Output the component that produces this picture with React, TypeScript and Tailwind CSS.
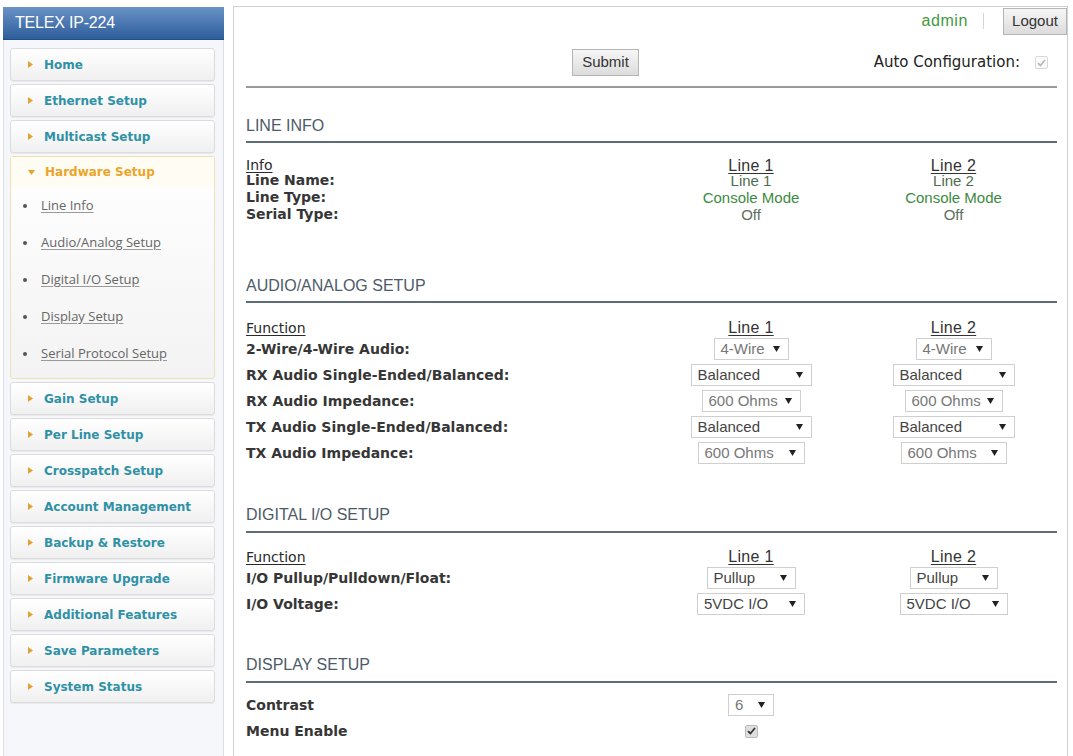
const menuTop = ["Home", "Ethernet Setup", "Multicast Setup"];
const hardwareLinks = [
  "Line Info",
  "Audio/Analog Setup",
  "Digital I/O Setup",
  "Display Setup",
  "Serial Protocol Setup",
];
const menuBottom = [
  "Gain Setup",
  "Per Line Setup",
  "Crosspatch Setup",
  "Account Management",
  "Backup & Restore",
  "Firmware Upgrade",
  "Additional Features",
  "Save Parameters",
  "System Status",
];

type SelectSpec = { value: string; w: string; muted?: boolean };

const audioRows: { label: string; l1: SelectSpec; l2: SelectSpec }[] = [
  {
    label: "2-Wire/4-Wire Audio:",
    l1: { value: "4-Wire", w: "w-[75px]", muted: true },
    l2: { value: "4-Wire", w: "w-[76px]", muted: true },
  },
  {
    label: "RX Audio Single-Ended/Balanced:",
    l1: { value: "Balanced", w: "w-[121px]" },
    l2: { value: "Balanced", w: "w-[122px]" },
  },
  {
    label: "RX Audio Impedance:",
    l1: { value: "600 Ohms", w: "w-[99px]", muted: true },
    l2: { value: "600 Ohms", w: "w-[98px]", muted: true },
  },
  {
    label: "TX Audio Single-Ended/Balanced:",
    l1: { value: "Balanced", w: "w-[121px]" },
    l2: { value: "Balanced", w: "w-[122px]" },
  },
  {
    label: "TX Audio Impedance:",
    l1: { value: "600 Ohms", w: "w-[107px]", muted: true },
    l2: { value: "600 Ohms", w: "w-[106px]", muted: true },
  },
];

const ioRows: { label: string; l1: SelectSpec; l2: SelectSpec }[] = [
  {
    label: "I/O Pullup/Pulldown/Float:",
    l1: { value: "Pullup", w: "w-[89px]" },
    l2: { value: "Pullup", w: "w-[88px]" },
  },
  {
    label: "I/O Voltage:",
    l1: { value: "5VDC I/O", w: "w-[108px]" },
    l2: { value: "5VDC I/O", w: "w-[108px]" },
  },
];

const label = "font-['DejaVu_Sans',sans-serif] text-[14px] font-bold text-[#363636]";
const arial = "font-['Liberation_Sans',Arial,sans-serif]";
const cols = "grid grid-cols-[405px_200px_205px] items-center";

const Arrow = ({ down, color }: { down?: boolean; color: string }) =>
  down ? (
    <svg width="7" height="5" viewBox="0 0 7 5" className="shrink-0">
      <path d="M0 0 L7 0 L3.5 5 Z" fill={color} />
    </svg>
  ) : (
    <svg width="5" height="7" viewBox="0 0 5 7" className="shrink-0">
      <path d="M0 0 L5 3.5 L0 7 Z" fill={color} />
    </svg>
  );

const Select = ({ value, w, muted }: SelectSpec) => (
  <div
    className={`${w} h-[22px] mx-auto flex items-center justify-between pl-[6px] pr-[8px] bg-white border border-[#cfcfcf] ${arial} text-[15px] ${
      muted ? "text-[#777]" : "text-[#444]"
    }`}
  >
    <span>{value}</span>
    <svg width="7" height="6" viewBox="0 0 7 6">
      <path d="M0 0 L7 0 L3.5 6 Z" fill="#222" />
    </svg>
  </div>
);

const Check = ({ faint }: { faint?: boolean }) => (
  <span
    className={`w-[13px] h-[13px] inline-flex items-center justify-center rounded-[2px] border ${
      faint ? "border-[#d8d8d8] bg-[#fbfbfb]" : "border-[#bbb] bg-[#dedede]"
    }`}
  >
    <svg width="9" height="8" viewBox="0 0 9 8">
      <path
        d="M1 4.2 L3.4 6.5 L8 1"
        fill="none"
        stroke={faint ? "#b8b8b8" : "#333"}
        strokeWidth="1.8"
      />
    </svg>
  </span>
);

const MenuItem = ({ text }: { text: string }) => (
  <div className="h-[33px] mb-[3px] ml-[6px] mr-[8px] flex items-center pl-[17px] rounded-[3px] border border-[#dcdcdc] bg-gradient-to-b from-white to-[#f0f0f0] shadow-[0_1px_1px_rgba(0,0,0,0.06)]">
    <Arrow color="#e3a235" />
    <span className="ml-[11px] font-['DejaVu_Sans',sans-serif] text-[12px] font-bold text-[#2f91a6]">
      {text}
    </span>
  </div>
);

const SectionTitle = ({ text, mt }: { text: string; mt: string }) => (
  <>
    <div className={`${mt} h-[20px] leading-[20px] ${arial} text-[16px] text-[#4d5b68]`}>
      {text}
    </div>
    <div className="mt-[5px] h-[2px] bg-[#5f6b76]" />
  </>
);

const ColHeads = ({ first }: { first: string }) => (
  <div className={`${cols} h-[20px]`}>
    <span className="font-['DejaVu_Sans',sans-serif] text-[14px] text-[#2a2a2a] underline underline-offset-2">
      {first}
    </span>
    <span className={`${arial} text-[16px] text-[#333] text-center underline underline-offset-2 tracking-[0.3px]`}>
      Line 1
    </span>
    <span className={`${arial} text-[16px] text-[#333] text-center underline underline-offset-2 tracking-[0.3px]`}>
      Line 2
    </span>
  </div>
);

export default function App() {
  return (
    <div className="h-[756px] overflow-hidden bg-white flex">
      {/* left navigation */}
      <aside className="w-[225px] pl-[3px] flex flex-col">
        <div className="mt-[7px] w-[221px] h-[33px] flex items-center pl-[12px] bg-gradient-to-b from-[#6a93c7] to-[#2d5d9b] border-b border-[#234c82]">
          <span className={`${arial} text-[16px] text-white tracking-[-0.2px]`}>TELEX IP-224</span>
        </div>
        <nav className="w-[221px] flex-1 pt-[8px] bg-[#f6f7fa] border-x border-[#dcdee3]">
          {menuTop.map((m) => (
            <MenuItem key={m} text={m} />
          ))}

          <div className="mb-[3px] ml-[6px] mr-[8px] rounded-[3px] border border-[#eee2b4] bg-gradient-to-b from-white to-[#f3f3f3] pb-[6px]">
            <div className="h-[30px] flex items-center pl-[17px] bg-[#fffdf3]">
              <Arrow down color="#e6a22f" />
              <span className="ml-[10px] font-['DejaVu_Sans',sans-serif] text-[12px] font-bold text-[#eba42a]">
                Hardware Setup
              </span>
            </div>
            {hardwareLinks.map((l) => (
              <div key={l} className="h-[37px] flex items-center pl-[12px]">
                <span className="w-[4px] h-[4px] rounded-full bg-[#555]" />
                <span className="ml-[14px] font-['Open_Sans',sans-serif] text-[13px] text-[#666] underline underline-offset-2 decoration-[#999]">
                  {l}
                </span>
              </div>
            ))}
          </div>

          {menuBottom.map((m) => (
            <MenuItem key={m} text={m} />
          ))}
        </nav>
      </aside>

      {/* main panel */}
      <main className="ml-[8px] mt-[6px] w-[835px] border-t border-x border-[#d0d0d0] flex flex-col">
        <div className="flex items-center justify-end h-[28px]">
          <span className={`${arial} text-[16px] text-[#3f9a3f] tracking-[0.6px]`}>admin</span>
          <span className="ml-[15px] w-px h-[16px] bg-[#d5d5d5]" />
          <button className={`ml-[19px] mt-[1px] w-[64px] h-[27px] border border-[#b5b5b5] bg-gradient-to-b from-[#f6f6f6] to-[#dcdcdc] ${arial} text-[15px] text-[#333]`}>
            Logout
          </button>
        </div>

        <div className="pl-[12px] pr-[10px]">
          <div className="mt-[14px] flex items-center">
            <div className="w-[326px]" />
            <button className={`w-[67px] h-[27px] border border-[#b5b5b5] bg-gradient-to-b from-[#f6f6f6] to-[#dcdcdc] ${arial} text-[15px] text-[#333]`}>
              Submit
            </button>
            <div className="flex-1" />
            <span className="font-['DejaVu_Sans',sans-serif] text-[15px] text-[#222]">
              Auto Configuration:
            </span>
            <span className="ml-[15px] mr-[9px] flex">
              <Check faint />
            </span>
          </div>

          <div className="mt-[10px] h-[2px] bg-[#9a9a9a]" />

          {/* line info */}
          <SectionTitle text="LINE INFO" mt="mt-[28px]" />
          <div className="mt-[12px]">
            <div className={`${cols} h-[17px]`}>
              <span className="font-['DejaVu_Sans',sans-serif] text-[14px] text-[#2a2a2a] underline underline-offset-2">
                Info
              </span>
              <span className={`${arial} text-[16px] leading-[17px] text-[#333] text-center underline underline-offset-2 tracking-[0.3px]`}>
                Line 1
              </span>
              <span className={`${arial} text-[16px] leading-[17px] text-[#333] text-center underline underline-offset-2 tracking-[0.3px]`}>
                Line 2
              </span>
            </div>
            {[
              ["Line Name:", "Line 1", "Line 2", "text-[#4f6e4f]"],
              ["Line Type:", "Console Mode", "Console Mode", "text-[#3d8a42]"],
              ["Serial Type:", "Off", "Off", "text-[#5d6e5d]"],
            ].map(([k, a, b, c]) => (
              <div key={k} className={`${cols} h-[17px] leading-[17px]`}>
                <span className={label}>{k}</span>
                <span className={`${arial} text-[15px] text-center ${c}`}>{a}</span>
                <span className={`${arial} text-[15px] text-center ${c}`}>{b}</span>
              </div>
            ))}
          </div>

          {/* audio / analog */}
          <SectionTitle text="AUDIO/ANALOG SETUP" mt="mt-[53px]" />
          <div className="mt-[13px]">
            <ColHeads first="Function" />
            {audioRows.map((r) => (
              <div key={r.label} className={`${cols} h-[26px]`}>
                <span className={label}>{r.label}</span>
                <Select {...r.l1} />
                <Select {...r.l2} />
              </div>
            ))}
          </div>

          {/* digital i/o */}
          <div className="mt-[39px]" />
          <div className={`h-[20px] leading-[20px] ${arial} text-[16px] text-[#4d5b68]`}>
            DIGITAL I/O SETUP
          </div>
          <div className="mt-[6px] h-[2px] bg-[#5f6b76]" />
          <div className="mt-[12px]">
            <ColHeads first="Function" />
            {ioRows.map((r) => (
              <div key={r.label} className={`${cols} h-[26px]`}>
                <span className={label}>{r.label}</span>
                <Select {...r.l1} />
                <Select {...r.l2} />
              </div>
            ))}
          </div>

          {/* display */}
          <div className={`mt-[38px] h-[20px] leading-[20px] ${arial} text-[16px] text-[#4d5b68]`}>
            DISPLAY SETUP
          </div>
          <div className="mt-[6px] h-[2px] bg-[#5f6b76]" />
          <div className="mt-[9px]">
            <div className={`${cols} h-[26px]`}>
              <span className={label}>Contrast</span>
              <Select value="6" w="w-[46px]" muted />
              <span />
            </div>
            <div className={`${cols} h-[26px]`}>
              <span className={label}>Menu Enable</span>
              <span className="flex justify-center">
                <Check />
              </span>
              <span />
            </div>
          </div>
        </div>
      </main>
    </div>
  );
}
